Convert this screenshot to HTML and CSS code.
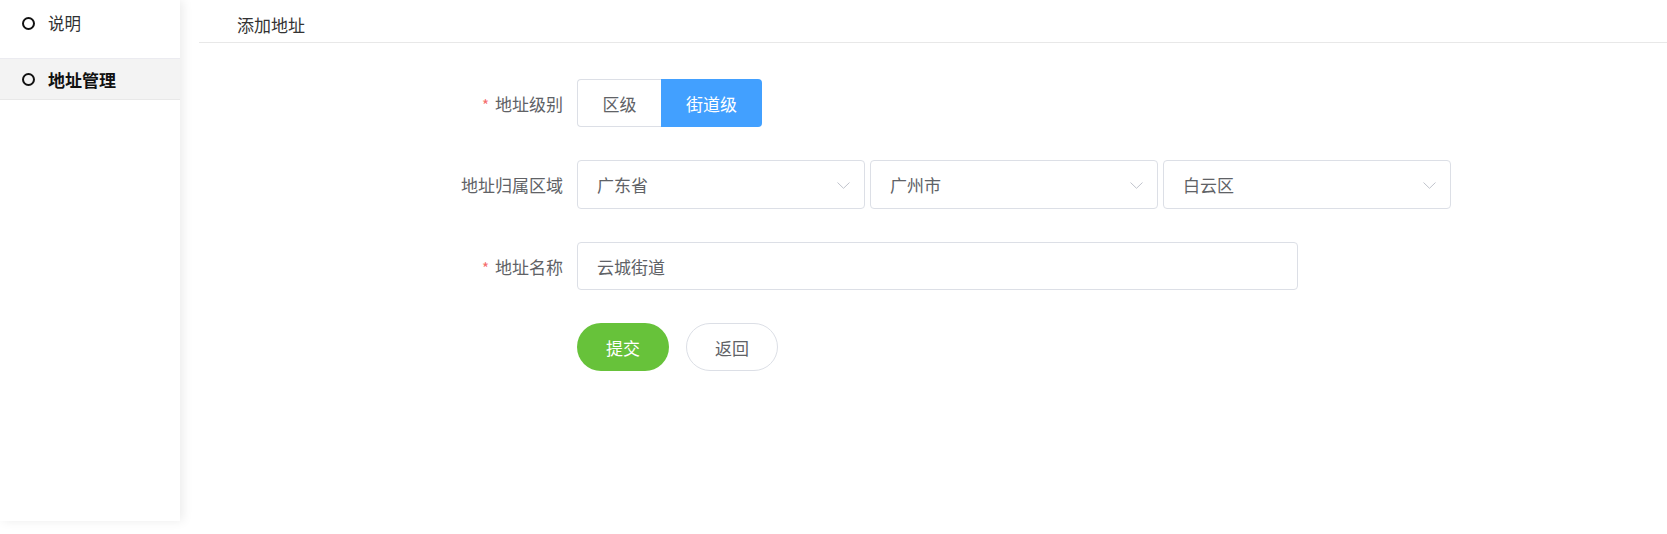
FILE: index.html
```html
<!DOCTYPE html>
<html lang="zh-CN">
<head>
<meta charset="utf-8">
<title>添加地址</title>
<link rel="stylesheet" href="styles.css">
</head>
<body>
<div class="layout">
  <aside class="sidebar">
    <div class="nav-item first"><span class="dot"></span><span>说明</span></div>
    <div class="nav-item active"><span class="dot"></span><span>地址管理</span></div>
  </aside>
  <main class="main">
    <div class="page-header">添加地址</div>
    <form class="form">
      <div class="form-row">
        <label class="form-label"><span class="req">*</span>地址级别</label>
        <div class="btn-group">
          <span class="seg">区级</span>
          <span class="seg seg-active">街道级</span>
        </div>
      </div>
      <div class="form-row">
        <label class="form-label">地址归属区域</label>
        <div class="selects">
          <div class="select"><span>广东省</span><svg class="chev" width="13" height="7" viewBox="0 0 13 7"><path d="M0.5 0.5 L6.5 6.3 L12.5 0.5" fill="none" stroke="#c0c4cc" stroke-width="1"/></svg></div>
          <div class="select"><span>广州市</span><svg class="chev" width="13" height="7" viewBox="0 0 13 7"><path d="M0.5 0.5 L6.5 6.3 L12.5 0.5" fill="none" stroke="#c0c4cc" stroke-width="1"/></svg></div>
          <div class="select"><span>白云区</span><svg class="chev" width="13" height="7" viewBox="0 0 13 7"><path d="M0.5 0.5 L6.5 6.3 L12.5 0.5" fill="none" stroke="#c0c4cc" stroke-width="1"/></svg></div>
        </div>
      </div>
      <div class="form-row">
        <label class="form-label"><span class="req">*</span>地址名称</label>
        <div class="input">云城街道</div>
      </div>
      <div class="form-row">
        <span class="form-label"></span>
        <div class="actions">
          <span class="btn btn-primary">提交</span>
          <span class="btn btn-default">返回</span>
        </div>
      </div>
    </form>
  </main>
</div>
</body>
</html>
```

FILE: styles.css
```css
html, body {
  margin: 0;
  padding: 0;
  background: #fff;
}
body {
  font-family: "Noto Sans CJK SC", "Noto Sans", sans-serif;
  color: #606266;
}
.layout {
  display: flex;
  align-items: flex-start;
  height: 534px;
}
.sidebar {
  width: 180px;
  height: 521px;
  flex: none;
  background: #fff;
  box-shadow: 3px 0 10px rgba(0, 0, 0, 0.08);
  display: flex;
  flex-direction: column;
}
.nav-item {
  display: flex;
  align-items: center;
  padding-left: 22px;
  font-size: 16.5px;
  color: #303133;
  box-sizing: border-box;
}
.nav-item.first {
  height: 58px;
  padding-bottom: 12px;
}
.nav-item.active {
  height: 42px;
  background: #f3f3f3;
  border-top: 1px solid #ebebf0;
  border-bottom: 1px solid #e8e8e8;
  font-weight: 700;
  color: #111;
  font-size: 17px;
}
.dot {
  width: 9px;
  height: 9px;
  border: 2.5px solid #111;
  border-radius: 50%;
  margin-right: 13px;
  flex: none;
}
.main {
  flex: 1;
  margin-left: 19px;
}
.page-header {
  height: 43px;
  box-sizing: border-box;
  padding-left: 38px;
  font-size: 17px;
  line-height: 50px;
  color: #333;
  border-bottom: 1px solid #e8e8e8;
}
.form {
  padding-top: 36px;
  padding-left: 208px;
}
.form-row {
  display: flex;
  align-items: center;
  margin-bottom: 33px;
}
.form-label {
  width: 156px;
  padding-right: 14px;
  text-align: right;
  font-size: 17px;
  color: #606266;
  flex: none;
}
.req {
  color: #f56c6c;
  margin-right: 6px;
  font-size: 15px;
}
.btn-group {
  display: flex;
  height: 48px;
}
.seg {
  display: flex;
  align-items: center;
  justify-content: center;
  font-size: 17px;
  box-sizing: border-box;
}
.seg:first-child {
  width: 84px;
  border: 1px solid #dcdfe6;
  border-right: none;
  border-radius: 4px 0 0 4px;
  color: #606266;
}
.seg-active {
  width: 101px;
  background: #42a0ff;
  color: #fff;
  border-radius: 0 4px 4px 0;
}
.selects {
  display: flex;
  gap: 5px;
}
.select {
  width: 288px;
  height: 49px;
  box-sizing: border-box;
  border: 1px solid #dcdfe6;
  border-radius: 4px;
  display: flex;
  align-items: center;
  justify-content: space-between;
  padding: 0 14px 0 19px;
  font-size: 17px;
  color: #606266;
}
.chev {
  display: block;
  margin-top: 1px;
}
.input {
  width: 721px;
  height: 48px;
  box-sizing: border-box;
  border: 1px solid #dcdfe6;
  border-radius: 4px;
  display: flex;
  align-items: center;
  padding-left: 19px;
  font-size: 17px;
  color: #606266;
}
.actions {
  display: flex;
  gap: 17px;
}
.btn {
  width: 92px;
  height: 48px;
  box-sizing: border-box;
  border-radius: 24px;
  display: flex;
  align-items: center;
  justify-content: center;
  font-size: 17px;
}
.btn-primary {
  background: #67c23a;
  color: #fff;
}
.btn-default {
  border: 1px solid #dcdfe6;
  color: #606266;
  background: #fff;
}
```
